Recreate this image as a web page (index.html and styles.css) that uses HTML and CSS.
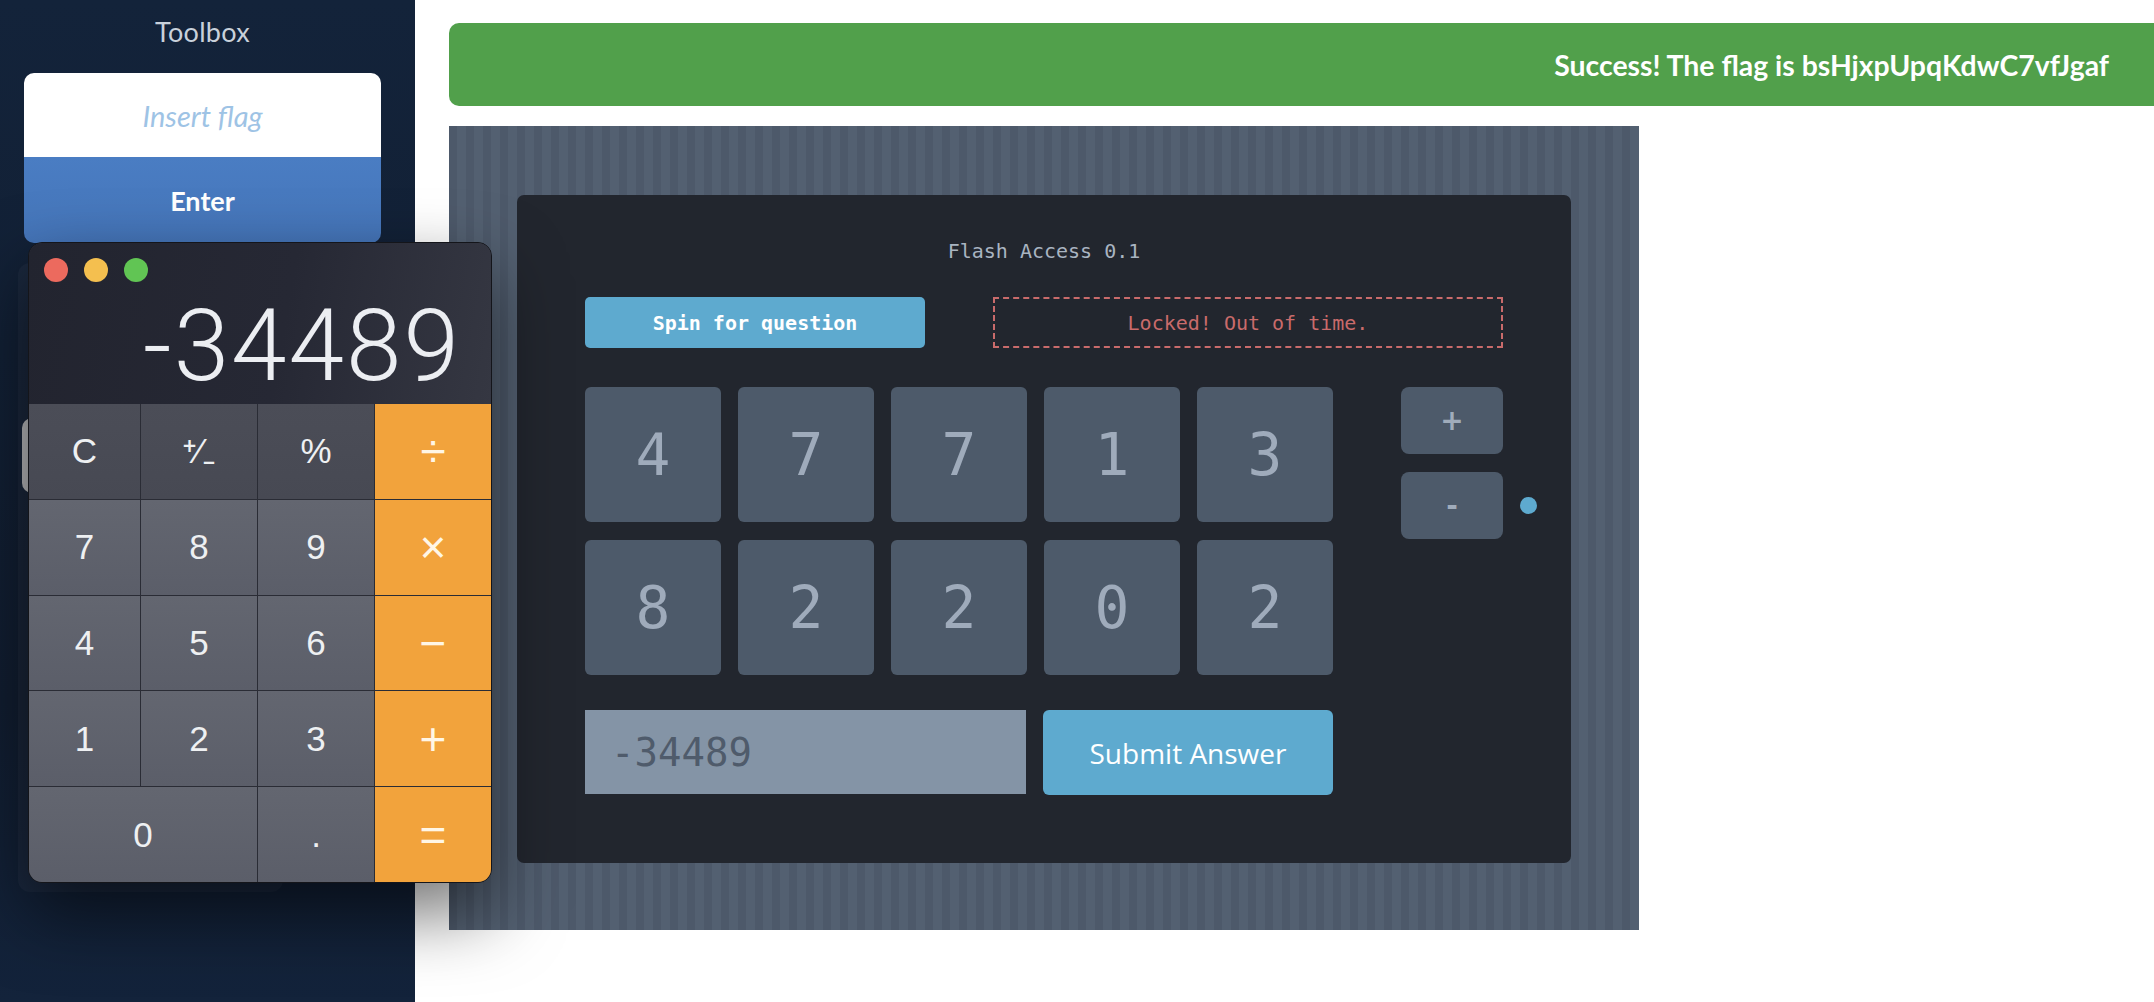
FILE: index.html
```html
<!DOCTYPE html>
<html lang="en">
<head>
<meta charset="utf-8">
<title>Flash Access</title>
<link rel="stylesheet" href="styles.css">
</head>
<body>
<div class="page">
  <aside class="sidebar">
    <h2 class="sb-title">Toolbox</h2>
    <div class="flag-card">
      <input class="flag-input" type="text" placeholder="Insert flag">
      <button class="flag-enter">Enter</button>
    </div>
    <div class="tool-card"><div class="tool-pill"></div></div>
  </aside>

  <main class="main">
    <div class="banner">Success! The flag is bsHjxpUpqKdwC7vfJgaf</div>
    <section class="flash">
      <div class="console">
        <div class="console-title">Flash Access 0.1</div>
        <div class="status-row">
          <button class="spin">Spin for question</button>
          <div class="locked">Locked! Out of time.</div>
        </div>
        <div class="pad-row">
          <div class="tiles">
            <div class="tile">4</div><div class="tile">7</div><div class="tile">7</div><div class="tile">1</div><div class="tile">3</div>
            <div class="tile">8</div><div class="tile">2</div><div class="tile">2</div><div class="tile">0</div><div class="tile">2</div>
          </div>
          <div class="ops">
            <button class="op">+</button>
            <div class="op-row"><button class="op">-</button><span class="dot"></span></div>
          </div>
        </div>
        <div class="answer-row">
          <div class="answer">-34489</div>
          <button class="submit">Submit Answer</button>
        </div>
      </div>
    </section>
  </main>
</div>

<div class="calc">
  <div class="calc-top">
    <div class="lights"><span class="l red"></span><span class="l yellow"></span><span class="l green"></span></div>
    <div class="display">-34489</div>
  </div>
  <div class="keys">
    <div class="k fn">C</div><div class="k fn">⁺∕₋</div><div class="k fn">%</div><div class="k or">÷</div>
    <div class="k">7</div><div class="k">8</div><div class="k">9</div><div class="k or">×</div>
    <div class="k">4</div><div class="k">5</div><div class="k">6</div><div class="k or">−</div>
    <div class="k">1</div><div class="k">2</div><div class="k">3</div><div class="k or">+</div>
    <div class="k zero">0</div><div class="k">.</div><div class="k or">=</div>
  </div>
</div>
</body>
</html>
```
FILE: styles.css
```css
* { box-sizing: border-box; }
html, body { margin: 0; padding: 0; }
body { background: #fff; font-family: "Lato", "Open Sans", sans-serif; width: 2154px; height: 1002px; overflow: hidden; position: relative; }

.page { display: flex; height: 1002px; }

.sidebar {
  width: 415px; flex: none; height: 100%;
  background: linear-gradient(180deg, #13233a 0%, #111d30 70%, #13233b 100%);
  display: flex; flex-direction: column; align-items: center;
  padding: 15px 10px 0 0;
}
.sb-title { margin: 0; font-weight: 400; font-size: 27px; line-height: 34px; color: #c9d1db; letter-spacing: 0.3px; }
.flag-card { margin-top: 24px; width: 357px; border-radius: 10px; overflow: hidden; display: flex; flex-direction: column; }
.flag-input {
  height: 84px; border: 0; outline: none; background: #fff; text-align: center;
  font-family: "Lato", sans-serif; font-style: italic; font-size: 29px; color: #333;
}
.flag-input::placeholder { color: #9ec3e5; }
.flag-enter {
  height: 86px; border: 0; background: linear-gradient(180deg, #4a7dc3, #4575b9);
  color: #fff; font-family: "Lato", sans-serif; font-weight: 700; font-size: 27px;
}
.tool-card {
  align-self: flex-start; margin: 20px 0 0 18px; width: 265px; height: 629px;
  border-radius: 12px; background: rgba(255,255,255,0.035); position: relative;
}
.tool-pill { position: absolute; left: 4px; top: 155px; width: 30px; height: 75px; border-radius: 10px; background: #b8b9bb; }

.main { flex: 1; padding: 23px 0 0 34px; }
.banner {
  height: 83px; background: #51a04b; border-radius: 10px 0 0 10px;
  display: flex; align-items: center; justify-content: flex-end; padding-right: 45px;
  color: #fff; font-weight: 700; font-size: 28.4px;
}
.flash {
  margin-top: 20px; width: 1190px; height: 804px; padding: 69px 68px;
  background: repeating-linear-gradient(90deg, #4d596a 0 8px, #536071 8px 17px);
}
.console {
  width: 1054px; height: 668px; background: #22262e; border-radius: 7px;
  padding: 44px 68px 0;
  font-family: "DejaVu Sans Mono", monospace;
}
.console-title { text-align: center; color: #a9b4c1; font-size: 20px; line-height: 24px; }
.status-row { display: flex; gap: 68px; margin-top: 34px; }
.spin {
  width: 340px; height: 51px; border: 0; border-radius: 5px; background: #5eaacf; color: #fff;
  font-family: "DejaVu Sans Mono", monospace; font-weight: 700; font-size: 20px;
}
.locked {
  width: 510px; height: 51px; border: 2px dashed #c96b6b; color: #c96b6b;
  display: flex; align-items: center; justify-content: center; font-size: 20px;
}
.pad-row { display: flex; margin-top: 39px; }
.tiles { display: grid; grid-template-columns: repeat(5, 136px); grid-auto-rows: 135px; gap: 18px 17px; }
.tile {
  background: #4d5a6a; border-radius: 6px; color: #9fabbb; font-size: 58px;
  display: flex; align-items: center; justify-content: center;
}
.ops { margin-left: 68px; display: flex; flex-direction: column; gap: 18px; }
.op-row { display: flex; align-items: center; gap: 17px; }
.op {
  width: 102px; height: 67px; border: 0; border-radius: 8px; background: #4d5a6a; color: #a0acbb;
  font-family: "DejaVu Sans", sans-serif; font-weight: 700; font-size: 28px;
}
.dot { width: 17px; height: 17px; border-radius: 50%; background: #5eaacf; }
.answer-row { display: flex; gap: 17px; margin-top: 35px; }
.answer {
  width: 441px; height: 84px; background: #8494a6; color: #4f5b6b; font-size: 39px;
  display: flex; align-items: center; padding-left: 26px;
}
.submit {
  width: 290px; height: 85px; border: 0; border-radius: 6px; background: #5eaacf; color: #fff;
  font-family: "Open Sans", sans-serif; font-size: 28px;
}

/* floating calculator window */
.calc {
  position: absolute; left: 28px; top: 242px; width: 464px; height: 641px;
  border-radius: 14px; overflow: hidden; border: 1px solid #14151a;
  box-shadow: 0 30px 70px rgba(0,0,0,0.55), 0 0 0 1px rgba(255,255,255,0.08) inset;
  display: flex; flex-direction: column; background: #2a2c35;
}
.calc-top {
  height: 161px; flex: none; position: relative;
  background: linear-gradient(100deg, #22242f 0%, #262834 55%, #353742 100%);
}
.lights { display: flex; gap: 16px; position: absolute; left: 15px; top: 15px; }
.l { width: 24px; height: 24px; border-radius: 50%; }
.red { background: #ec6a5e; }
.yellow { background: #f4bf4f; }
.green { background: #61c554; }
.display {
  position: absolute; right: 30px; top: 43px;
  font-family: "Roboto", "Liberation Sans", sans-serif; font-weight: 300; font-size: 100px; line-height: 120px;
  color: #eceef2; letter-spacing: 2px;
}
.keys { flex: 1; display: grid; grid-template-columns: 111px 116px 116px 1fr; grid-template-rows: repeat(5, 1fr); gap: 1px; background: #2a2c35; }
.k {
  display: flex; align-items: center; justify-content: center;
  background: linear-gradient(180deg, #636670 0%, #5b5e69 100%);
  color: #eef0f2; font-family: "Liberation Sans", "Roboto", sans-serif; font-size: 35px;
}
.k.fn { background: linear-gradient(180deg, #4b4d57 0%, #474953 100%); }
.k.or { background: #f2a33c; color: #fff6e6; font-size: 46px; font-weight: 400; }
.k.zero { grid-column: span 2; }
```
